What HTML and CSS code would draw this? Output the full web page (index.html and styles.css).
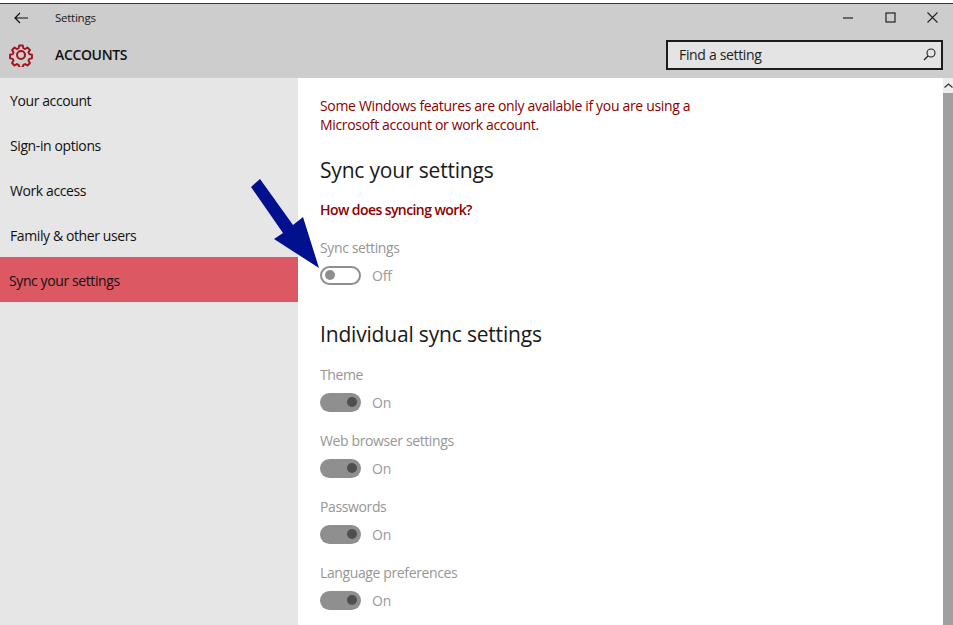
FILE: index.html
```html
<!DOCTYPE html>
<html lang="en">
<head>
<meta charset="utf-8">
<title>Settings</title>
<link rel="stylesheet" href="styles.css">
</head>
<body>
<div class="window">
  <header class="header">
    <div class="titlebar">
      <svg class="back" width="14" height="12" viewBox="0 0 14 12"><path d="M6 1 1 6l5 5M1 6h13" fill="none" stroke="#111" stroke-width="1.2"/></svg>
      <span class="app-title">Settings</span>
      <div class="controls">
        <svg width="11" height="11" viewBox="0 0 11 11"><path d="M0 6h10" stroke="#222" stroke-width="1.2"/></svg>
        <svg width="11" height="11" viewBox="0 0 11 11"><rect x="1" y="1" width="9" height="9" fill="none" stroke="#222" stroke-width="1.2"/></svg>
        <svg width="11" height="11" viewBox="0 0 11 11"><path d="M.5.5l10 10M10.500.5l-10 10" stroke="#222" stroke-width="1.1"/></svg>
      </div>
    </div>
    <div class="subbar">
      <svg class="gear" width="24" height="24" viewBox="0 0 24 24"><path d="M10 1.500h4l.6 3 2 .9 2.600-1.700 2.800 2.800-1.700 2.600.9 2 3 .6v4l-3 .6-.9 2 1.700 2.600-2.800 2.800-2.600-1.700-2 .9-.6 3h-4l-.6-3-2-.9-2.600 1.700-2.800-2.800 1.700-2.600-.9-2-3-.6v-4l3-.6.9-2-1.700-2.600 2.800-2.800 2.600 1.700 2-.9z" transform="translate(1.200 1.200) scale(.9)" fill="none" stroke="#a3141c" stroke-width="2.100" stroke-linejoin="round"/><circle cx="12" cy="12" r="4" fill="none" stroke="#a3141c" stroke-width="2"/></svg>
      <span class="section-title">ACCOUNTS</span>
      <div class="search">
        <span>Find a setting</span>
        <svg width="13" height="13" viewBox="0 0 13 13"><circle cx="8" cy="5" r="4" fill="none" stroke="#222" stroke-width="1.1"/><path d="M5 8l-4 4" stroke="#222" stroke-width="1.2"/></svg>
      </div>
    </div>
  </header>
  <div class="body">
    <nav class="sidebar">
      <a class="nav-item">Your account</a>
      <a class="nav-item">Sign-in options</a>
      <a class="nav-item">Work access</a>
      <a class="nav-item">Family &amp; other users</a>
      <a class="nav-item selected">Sync your settings</a>
    </nav>
    <main class="content">
      <p class="notice">Some Windows features are only available if you are using a<br>Microsoft account or work account.</p>
      <h2 class="heading first">Sync your settings</h2>
      <a class="link">How does syncing work?</a>
      <div class="setting sync">
        <div class="label">Sync settings</div>
        <div class="toggle-row"><span class="toggle off"><i></i></span><span class="state">Off</span></div>
      </div>
      <h2 class="heading second">Individual sync settings</h2>
      <div class="setting">
        <div class="label">Theme</div>
        <div class="toggle-row"><span class="toggle on"><i></i></span><span class="state">On</span></div>
      </div>
      <div class="setting">
        <div class="label">Web browser settings</div>
        <div class="toggle-row"><span class="toggle on"><i></i></span><span class="state">On</span></div>
      </div>
      <div class="setting">
        <div class="label">Passwords</div>
        <div class="toggle-row"><span class="toggle on"><i></i></span><span class="state">On</span></div>
      </div>
      <div class="setting">
        <div class="label">Language preferences</div>
        <div class="toggle-row"><span class="toggle on"><i></i></span><span class="state">On</span></div>
      </div>
    </main>
    <div class="scrollbar">
      <div class="scroll-up"><svg width="9" height="5" viewBox="0 0 9 5"><path d="M.5 4.500 4.500 1l4 3.500" fill="none" stroke="#333" stroke-width="1.200"/></svg></div>
      <div class="scroll-thumb"></div>
    </div>
  </div>
  <svg class="arrow" width="80" height="100" viewBox="0 0 80 100"><polygon points="1,9 10,1 43,47 53,39 69,90 24,61 33,55" fill="#00108f"/></svg>
</div>
</body>
</html>
```
FILE: styles.css
```css
* { box-sizing: border-box; }
html, body { margin: 0; height: 100%; overflow: hidden; }
body { font-family: "Open Sans", "Noto Sans", sans-serif; background: #fff; color: #111; }
.window { position: relative; width: 953px; height: 625px; display: flex; flex-direction: column; padding-top: 3px; }
.header { height: 75px; flex: none; background: #cdcdcd; border-top: 1px solid #6e1a25; }
.titlebar { height: 27px; display: flex; align-items: center; padding: 0 15px 0 14px; }
.back { margin-right: 27px; }
.app-title { font-size: 11.500px; letter-spacing: -.25px; color: #1a1a1a; }
.controls { margin-left: auto; display: flex; gap: 31px; align-items: center; }
.subbar { height: 47px; display: flex; align-items: center; padding: 0 10px 0 10px; }
.gear { margin-right: 22px; margin-left: -1px; }
.section-title { font-size: 14px; font-weight: 600; letter-spacing: -.35px; color: #111; }
.search { margin-left: auto; width: 277px; height: 30px; border: 2px solid #1c1c1c; background: #e4e4e4; display: flex; align-items: center; justify-content: space-between; padding: 0 5px 0 11px; font-size: 14px; letter-spacing: -.33px; color: #222; }
.body { flex: 1; display: flex; min-height: 0; }
.sidebar { width: 298px; flex: none; background: #e6e6e6; display: flex; flex-direction: column; }
.nav-item { height: 45px; display: flex; align-items: center; padding-left: 10px; font-size: 14px; letter-spacing: -.4px; color: #111; }
.nav-item.selected { background: #dc5863; margin-top: -1px; padding: 2px 0 0 9px; }
.content { flex: 1; padding: 18px 0 0 22px; background: #fff; }
.notice { margin: 0; font-size: 14px; line-height: 19px; letter-spacing: -.33px; font-weight: 500; color: #8b0000; }
.heading { margin: 0; font-weight: 400; font-size: 21px; letter-spacing: -.18px; line-height: 28px; color: #1a1a1a; }
.heading.first { margin-top: 22px; }
.heading.second { margin-top: 35px; }
.link { display: block; margin-top: 16px; font-size: 14px; line-height: 19px; font-weight: 600; letter-spacing: -.58px; color: #8b0000; }
.setting { height: 66px; }
.setting.sync { margin-top: 19px; height: auto; }
.heading.second + .setting { margin-top: 17px; }
.label { font-size: 14px; line-height: 19px; letter-spacing: -.38px; color: #969696; }
.toggle-row { display: flex; align-items: center; margin-top: 8px; height: 20px; }
.toggle { width: 41px; height: 19px; border-radius: 10px; display: flex; align-items: center; padding: 0 4px; margin-right: 11px; }
.toggle i { width: 10px; height: 10px; border-radius: 50%; display: block; }
.toggle.off { border: 2px solid #8f8f8f; background: #fff; padding: 0 3px; }
.toggle.off i { background: #8f8f8f; }
.toggle.on { background: #8f8f8f; justify-content: flex-end; padding: 0 4px; }
.toggle.on i { background: #4f4f4f; }
.state { font-size: 14px; letter-spacing: -.2px; color: #9a9a9a; }
.scrollbar { width: 10px; flex: none; background: #a0a0a0; display: flex; flex-direction: column; }
.scroll-up { height: 15px; background: #eee; display: flex; align-items: center; justify-content: center; }
.scroll-thumb { flex: 1; }
.arrow { position: absolute; left: 250px; top: 178px; }
```
